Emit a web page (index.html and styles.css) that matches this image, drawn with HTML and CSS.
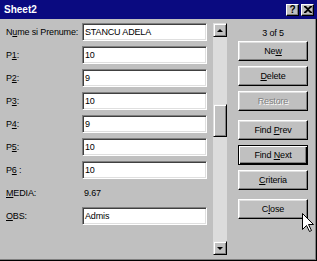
FILE: index.html
```html
<!DOCTYPE html>
<html lang="en">
<head>
    <meta charset="UTF-8">
    <title>Sheet2</title>
    <link rel="stylesheet" href="styles.css">
</head>
<body>
    <div class="window">
        <div class="titlebar">
            <span class="title">Sheet2</span>
            <div class="tb-buttons">
                <span class="tb-btn help">?</span>
                <span class="tb-btn">
                    <svg width="8" height="7" viewBox="0 0 8 7"><path d="M0 0h2l2 2 2-2h2v1L5 3.5 8 6v1H6L4 5 2 7H0V6l3-2.5L0 1z" fill="#000"/></svg>
                </span>
            </div>
        </div>
        <div class="content">
            <div class="form">
                <label>N<u>u</u>me si Prenume:</label><div class="field">STANCU ADELA</div>
                <label>P<u>1</u>:</label><div class="field">10</div>
                <label>P<u>2</u>:</label><div class="field">9</div>
                <label>P<u>3</u>:</label><div class="field">10</div>
                <label>P<u>4</u>:</label><div class="field">9</div>
                <label>P<u>5</u>:</label><div class="field">10</div>
                <label>P<u>6</u> :</label><div class="field">10</div>
                <label><u>M</u>EDIA:</label><div class="value">9.67</div>
                <label><u>O</u>BS:</label><div class="field">Admis</div>
            </div>
            <div class="scrollbar">
                <div class="sb-btn up"></div>
                <div class="sb-track">
                    <div class="sb-thumb"></div>
                </div>
                <div class="sb-btn down"></div>
            </div>
            <div class="actions">
                <div class="counter">3 of 5</div>
                <button>Ne<u>w</u></button>
                <button><u>D</u>elete</button>
                <button class="disabled">Restore</button>
                <button class="gap">Find <u>P</u>rev</button>
                <button class="default">Find <u>N</u>ext</button>
                <button><u>C</u>riteria</button>
                <button class="gap">C<u>l</u>ose</button>
            </div>
        </div>
        <svg class="cursor" width="12" height="20" viewBox="0 0 12 20">
            <path d="M0.5 0.5V16.5L4.5 12.5L7.5 18.5L9.5 17.5L6.5 11.5H11.5Z" fill="#fff" stroke="#000" stroke-width="1"/>
        </svg>
    </div>
</body>
</html>
```

FILE: styles.css
```css
body {
    margin: 0;
    font-family: "Liberation Sans", Arial, sans-serif;
    font-size: 9px;
    letter-spacing: -0.15px;
    color: #000;
}
.window {
    width: 317px;
    height: 261px;
    background-color: #c0c0c0;
    position: relative;
    box-sizing: border-box;
    box-shadow: inset -1px -1px #000, inset -2px -2px #808080;
    overflow: hidden;
}
.titlebar {
    height: 19px;
    background-color: #0a0a80;
    display: flex;
    align-items: center;
    justify-content: space-between;
    padding: 0 3px 0 4px;
}
.title {
    color: #fff;
    font-weight: bold;
    font-size: 10px;
    letter-spacing: 0;
}
.tb-buttons {
    display: flex;
    gap: 2px;
}
.tb-btn {
    width: 13px;
    height: 12px;
    box-sizing: border-box;
    background-color: #c0c0c0;
    border: 1px solid;
    border-color: #fff #000 #000 #fff;
    box-shadow: inset -1px -1px #808080;
    display: flex;
    align-items: center;
    justify-content: center;
    font-weight: bold;
    font-size: 10px;
    line-height: 1;
}
.content {
    display: flex;
    padding: 4px 0 0 6px;
}
.form {
    display: grid;
    grid-template-columns: 76px 125px;
    grid-auto-rows: 18px;
    row-gap: 5px;
    align-items: center;
}
label {
    white-space: nowrap;
}
.field {
    height: 18px;
    box-sizing: border-box;
    background-color: #fff;
    border: 1px solid;
    border-color: #808080 #fff #fff #808080;
    box-shadow: inset 1px 1px #404040, inset -1px -1px #dfdfdf;
    padding: 0 2px;
    line-height: 16px;
    white-space: nowrap;
}
.value {
    padding-left: 2px;
}
.scrollbar {
    margin-left: 6px;
    width: 14px;
    height: 232px;
    display: flex;
    flex-direction: column;
    background-color: #dcdcdc;
}
.sb-btn {
    width: 14px;
    height: 14px;
    box-sizing: border-box;
    background-color: #c0c0c0;
    border: 1px solid;
    border-color: #dfdfdf #000 #000 #dfdfdf;
    box-shadow: inset 1px 1px #fff, inset -1px -1px #808080;
    display: flex;
    align-items: center;
    justify-content: center;
}
.sb-btn::before {
    content: '';
    border-left: 3px solid transparent;
    border-right: 3px solid transparent;
}
.sb-btn.up::before { border-bottom: 3px solid #000; }
.sb-btn.down::before { border-top: 3px solid #000; }
.sb-track {
    flex: 1;
    padding-top: 67px;
}
.sb-thumb {
    height: 33px;
    box-sizing: border-box;
    background-color: #c0c0c0;
    border: 1px solid;
    border-color: #dfdfdf #000 #000 #dfdfdf;
    box-shadow: inset 1px 1px #fff, inset -1px -1px #808080;
}
.actions {
    margin-left: 11px;
    width: 70px;
    display: flex;
    flex-direction: column;
    gap: 5px;
}
.counter {
    height: 13px;
    text-align: center;
    line-height: 21px;
}
button {
    height: 20px;
    box-sizing: border-box;
    background-color: #c0c0c0;
    border: 1px solid;
    border-color: #fff #000 #000 #fff;
    box-shadow: inset -1px -1px #808080, inset 1px 1px #dfdfdf;
    font-family: inherit;
    font-size: 9px;
    letter-spacing: -0.15px;
    color: #000;
    padding: 0;
}
button.gap {
    margin-top: 4px;
}
button.default {
    border: 1px solid #000;
    box-shadow: inset 1px 1px #fff, inset -1px -1px #000, inset -2px -2px #808080;
}
button.disabled {
    color: #808080;
    text-shadow: 1px 1px #fff;
}
.cursor {
    position: absolute;
    left: 302px;
    top: 213px;
}
```
